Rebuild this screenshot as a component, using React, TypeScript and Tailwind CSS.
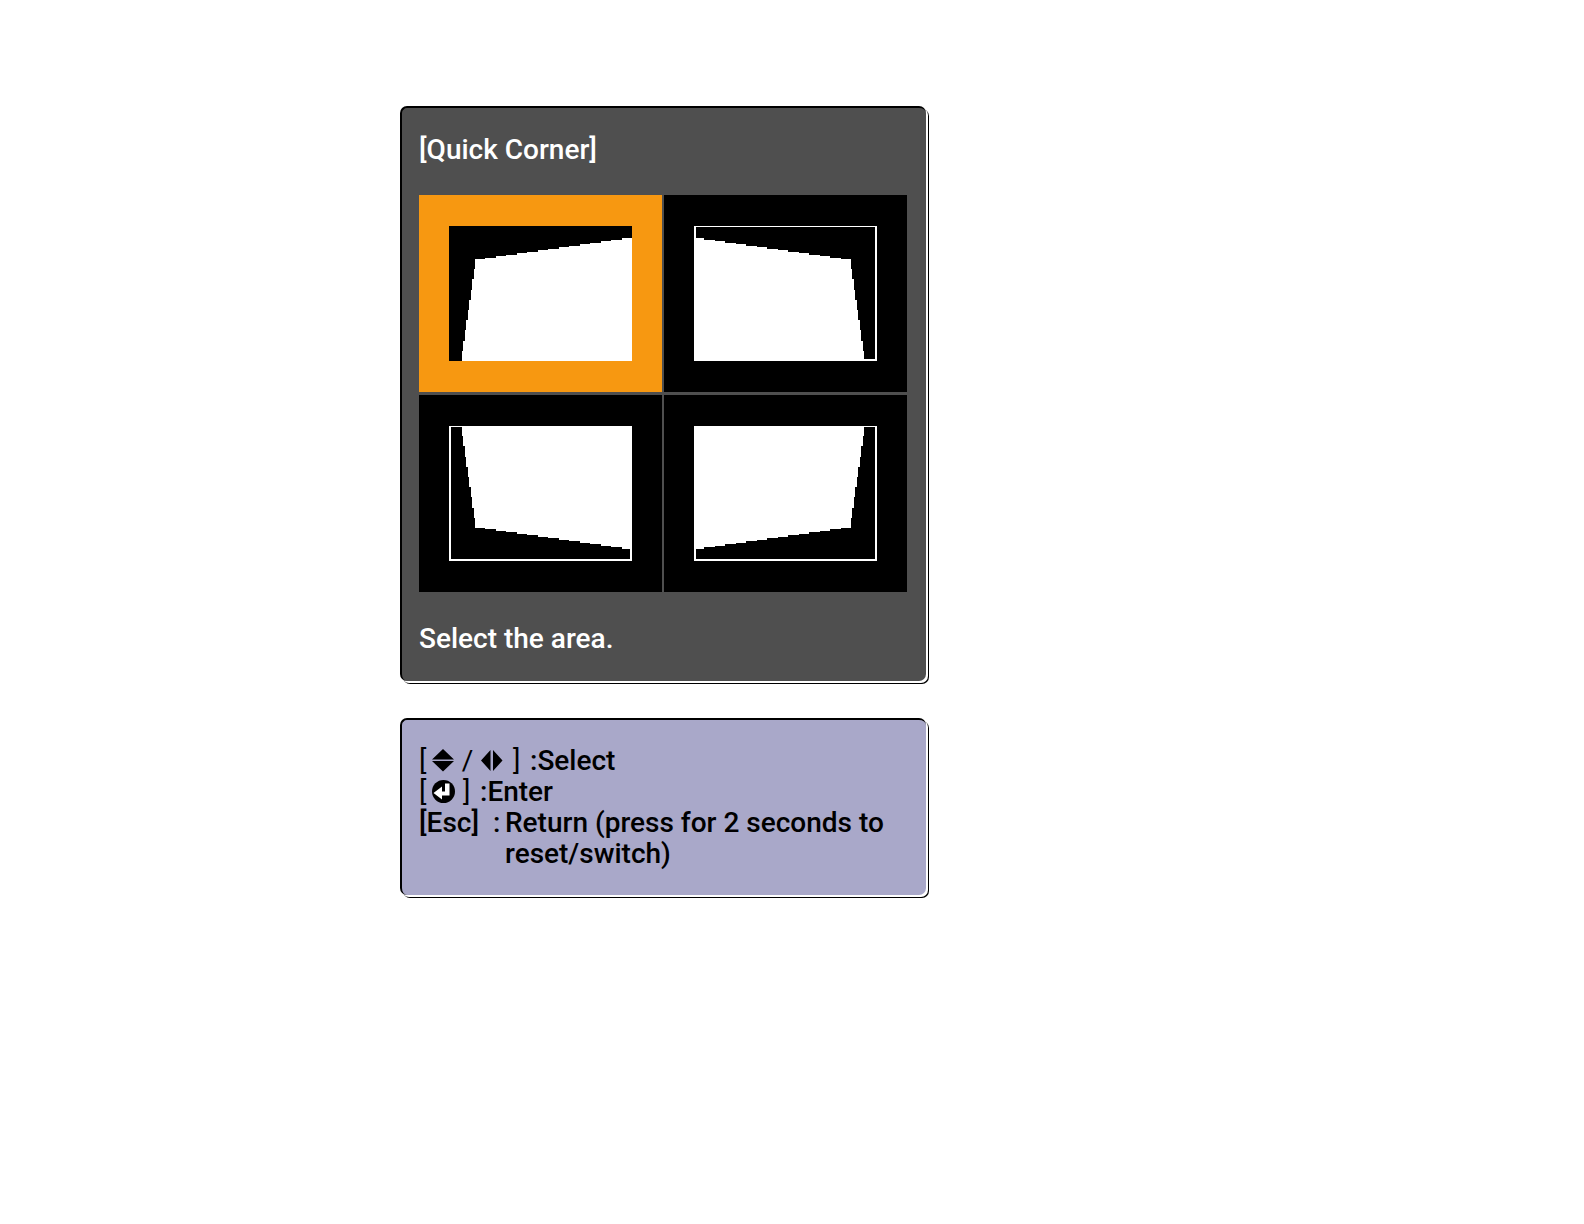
import { useState } from "react";

type Corner = { name: string; flipX: boolean; flipY: boolean };

const corners: Corner[] = [
  { name: "Top left", flipX: false, flipY: false },
  { name: "Top right", flipX: true, flipY: false },
  { name: "Bottom left", flipX: false, flipY: true },
  { name: "Bottom right", flipX: true, flipY: true },
];

const W = 183;
const H = 135;
const INSET = { x: 26, y: 33 };

/* Outline of the screen area with its top left corner pulled in, drawn in coarse steps. */
function steppedOutline() {
  const points: [number, number][] = [[W, H]];
  const rise = 10;
  for (let i = 0; i < rise; i++) {
    const x = Math.round(13 + (i * (INSET.x - 13)) / (rise - 1));
    points.push([x, Math.round(H - (i * (H - INSET.y)) / rise)]);
    points.push([x, Math.round(H - ((i + 1) * (H - INSET.y)) / rise)]);
  }
  const run = 15;
  const width = (W - INSET.x) / run;
  for (let i = 0; i < run; i++) {
    const y = Math.round(INSET.y - (i * 21) / (run - 1));
    points.push([Math.round(INSET.x + i * width), y]);
    points.push([Math.round(INSET.x + (i + 1) * width), y]);
  }
  return points;
}

const outline = steppedOutline();

function CornerArt({ corner, selected }: { corner: Corner; selected: boolean }) {
  const points = outline
    .map(([x, y]) => `${corner.flipX ? W - x : x},${corner.flipY ? H - y : y}`)
    .join(" ");
  return (
    <svg viewBox="0 0 183 135" className="block w-full" shapeRendering="crispEdges" aria-hidden="true">
      <rect width="183" height="135" fill="#000" />
      <polygon points={points} fill="#fff" />
      {!selected && <path d="M0 0h183v135H0zM2 1v132h179V1z" fill="#fff" fillRule="evenodd" />}
    </svg>
  );
}

function UpDown() {
  return (
    <svg viewBox="0 0 22 24" className="h-6 w-[22px]" role="img" aria-label="Up or down">
      <path d="M11 0 22 10.500H0zM0 12h22L11 22.500z" fill="#000" />
    </svg>
  );
}

function LeftRight() {
  return (
    <svg viewBox="0 0 22 24" className="h-6 w-[22px]" role="img" aria-label="Left or right">
      <path d="M9.500 1v21L0 11.500zM12 1v21L21.500 11.500z" fill="#000" />
    </svg>
  );
}

function EnterIcon() {
  return (
    <svg viewBox="0 0 23 23" className="h-[23px] w-[23px]" role="img" aria-label="Enter key">
      <circle cx="11.500" cy="11.500" r="11.500" fill="#000" />
      <path d="M13 3.500h4.500v12H10V19.500L1.500 13 10 6.500v5h3z" fill="#fff" />
    </svg>
  );
}

export default function App() {
  const [selected, setSelected] = useState(0);
  return (
    <main className="min-h-screen bg-white pt-[106px] pb-16 pl-[400px] font-['Roboto',sans-serif] text-[28px] leading-[31px] font-medium">
      <div className="flex w-full max-w-[526px] flex-col gap-[37px]">
        <section className="rounded-[7px] border-t-2 border-l-2 border-black bg-[#4f4f4f] pt-[26px] pr-[19px] pb-[27px] pl-[17px] text-white shadow-[2px_2px_0_#fff,3px_3px_0_#000]">
          <h1 className="pb-[30px]">[Quick Corner]</h1>
          <div className="grid grid-cols-2 gap-x-[2px] gap-y-[3px]">
            {corners.map((corner, i) => (
              <button
                key={corner.name}
                type="button"
                aria-label={corner.name}
                aria-pressed={selected === i}
                onClick={() => setSelected(i)}
                className={
                  selected === i
                    ? "bg-[#f79811] px-[30px] py-[31px]"
                    : "bg-black px-[30px] py-[31px]"
                }
              >
                <CornerArt corner={corner} selected={selected === i} />
              </button>
            ))}
          </div>
          <p className="pt-[31px]">Select the area.</p>
        </section>

        <section className="rounded-[7px] border-t-2 border-l-2 border-black bg-[#a9a8c9] pt-[25px] pr-[19px] pb-[26px] pl-[17px] text-black shadow-[2px_2px_0_#fff,3px_3px_0_#000]">
          <div className="flex items-center">
            <span className="w-[13px] font-normal">[</span>
            <UpDown />
            <span className="w-[27px] text-center font-normal">/</span>
            <LeftRight />
            <span className="w-[27px] pl-[10px] font-normal">]</span>
            <span>:Select</span>
          </div>
          <div className="flex items-center">
            <span className="w-[13px] font-normal">[</span>
            <EnterIcon />
            <span className="w-[25px] pl-2 font-normal">]</span>
            <span>:Enter</span>
          </div>
          <div className="flex">
            <span className="w-[74px]">[Esc]</span>
            <span className="w-3">:</span>
            <span className="flex-1">
              Return (press for 2 seconds to
              <br />
              reset/switch)
            </span>
          </div>
        </section>
      </div>
    </main>
  );
}
